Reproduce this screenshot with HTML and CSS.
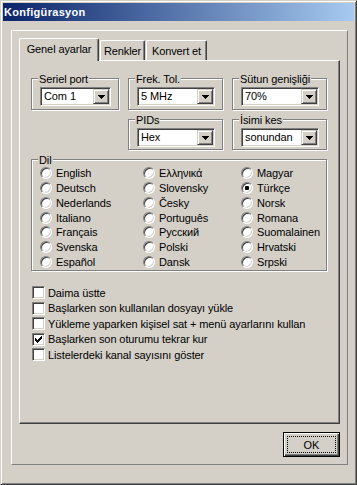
FILE: index.html
```html
<!DOCTYPE html>
<html lang="tr">
<head>
  <meta charset="UTF-8" />
  <title>Konfigürasyon</title>
  <link rel="stylesheet" href="styles.css">
</head>
<body>
  <div class="window">
    <div class="titlebar">Konfigürasyon</div>

    <div class="client">
      <div class="tabs">
        <div class="tab tab-genel active">Genel ayarlar</div>
        <div class="tab tab-renkler">Renkler</div>
        <div class="tab tab-konvert">Konvert et</div>
      </div>

      <div class="tab-page">
        <div class="groups">
          <div class="group">
            <div class="group-title">Seriel port</div>
            <div class="combo"><span class="combo-value">Com 1</span><span class="combo-btn"><svg width="7" height="4" viewBox="0 0 7 4" shape-rendering="crispEdges"><path d="M0 0h7v1H0zM1 1h5v1H1zM2 2h3v1H2zM3 3h1v1H3z" fill="#000"/></svg></span></div>
          </div>
          <div class="group">
            <div class="group-title">Frek. Tol.</div>
            <div class="combo"><span class="combo-value">5 MHz</span><span class="combo-btn"><svg width="7" height="4" viewBox="0 0 7 4" shape-rendering="crispEdges"><path d="M0 0h7v1H0zM1 1h5v1H1zM2 2h3v1H2zM3 3h1v1H3z" fill="#000"/></svg></span></div>
          </div>
          <div class="group">
            <div class="group-title">Sütun genişliği</div>
            <div class="combo"><span class="combo-value">70%</span><span class="combo-btn"><svg width="7" height="4" viewBox="0 0 7 4" shape-rendering="crispEdges"><path d="M0 0h7v1H0zM1 1h5v1H1zM2 2h3v1H2zM3 3h1v1H3z" fill="#000"/></svg></span></div>
          </div>

          <div class="group group-pids">
            <div class="group-title">PIDs</div>
            <div class="combo"><span class="combo-value">Hex</span><span class="combo-btn"><svg width="7" height="4" viewBox="0 0 7 4" shape-rendering="crispEdges"><path d="M0 0h7v1H0zM1 1h5v1H1zM2 2h3v1H2zM3 3h1v1H3z" fill="#000"/></svg></span></div>
          </div>
          <div class="group">
            <div class="group-title">İsimi kes</div>
            <div class="combo"><span class="combo-value">sonundan</span><span class="combo-btn"><svg width="7" height="4" viewBox="0 0 7 4" shape-rendering="crispEdges"><path d="M0 0h7v1H0zM1 1h5v1H1zM2 2h3v1H2zM3 3h1v1H3z" fill="#000"/></svg></span></div>
          </div>

          <div class="group group-dil">
            <div class="group-title">Dil</div>
            <div class="radios">
              <label class="radio"><span class="radio-mark"></span>English</label>
              <label class="radio"><span class="radio-mark"></span>Deutsch</label>
              <label class="radio"><span class="radio-mark"></span>Nederlands</label>
              <label class="radio"><span class="radio-mark"></span>Italiano</label>
              <label class="radio"><span class="radio-mark"></span>Français</label>
              <label class="radio"><span class="radio-mark"></span>Svenska</label>
              <label class="radio"><span class="radio-mark"></span>Español</label>

              <label class="radio"><span class="radio-mark"></span>Ελληνικά</label>
              <label class="radio"><span class="radio-mark"></span>Slovensky</label>
              <label class="radio"><span class="radio-mark"></span>Česky</label>
              <label class="radio"><span class="radio-mark"></span>Português</label>
              <label class="radio"><span class="radio-mark"></span>Русский</label>
              <label class="radio"><span class="radio-mark"></span>Polski</label>
              <label class="radio"><span class="radio-mark"></span>Dansk</label>

              <label class="radio"><span class="radio-mark"></span>Magyar</label>
              <label class="radio"><span class="radio-mark checked"></span>Türkçe</label>
              <label class="radio"><span class="radio-mark"></span>Norsk</label>
              <label class="radio"><span class="radio-mark"></span>Romana</label>
              <label class="radio"><span class="radio-mark"></span>Suomalainen</label>
              <label class="radio"><span class="radio-mark"></span>Hrvatski</label>
              <label class="radio"><span class="radio-mark"></span>Srpski</label>
            </div>
          </div>
        </div>

        <div class="checks">
          <label class="check"><span class="check-box"></span>Daima üstte</label>
          <label class="check"><span class="check-box"></span>Başlarken son kullanılan dosyayı yükle</label>
          <label class="check"><span class="check-box"></span>Yükleme yaparken kişisel sat + menü ayarlarını kullan</label>
          <label class="check"><span class="check-box"><svg width="7" height="7" viewBox="0 0 7 7" shape-rendering="crispEdges"><path d="M0 2h1v3H0zM1 3h1v3H1zM2 4h1v3H2zM3 3h1v3H3zM4 2h1v3H4zM5 1h1v3H5zM6 0h1v3H6z" fill="#000"/></svg></span>Başlarken son oturumu tekrar kur</label>
          <label class="check"><span class="check-box"></span>Listelerdeki kanal sayısını göster</label>
        </div>
      </div>

      <div class="footer">
        <button class="btn-ok"><span class="btn-focus">OK</span></button>
      </div>
    </div>
  </div>
</body>
</html>
```

FILE: styles.css
```css
html, body {
  margin: 0;
  padding: 0;
  background: #d4d0c8;
  font-family: "Liberation Sans", Arial, sans-serif;
  font-size: 11px;
  letter-spacing: -0.1px;
  color: #000;
}

.window {
  width: 357px;
  height: 485px;
  box-sizing: border-box;
  padding: 2px;
  border: 1px solid;
  border-color: #d4d0c8 #404040 #404040 #d4d0c8;
  box-shadow: inset 1px 1px 0 #fff, inset -1px -1px 0 #808080;
}

.titlebar {
  height: 18px;
  line-height: 18px;
  padding-left: 1px;
  color: #fff;
  font-weight: bold;
  letter-spacing: 0.3px;
  background: linear-gradient(to right, #0a246a, #a6caf0);
}

.client {
  margin: 9px 0 0 8px;
  width: 337px;
  height: 435px;
  box-sizing: border-box;
  padding: 7px;
  border: 1px solid;
  border-color: #fff #808080 #808080 #fff;
  display: flex;
  flex-direction: column;
}

/* tabs */
.tabs {
  height: 22px;
  display: flex;
  align-items: flex-end;
}

.tab {
  height: 20px;
  box-sizing: border-box;
  margin-right: 1px;
  padding-top: 4px;
  line-height: 13px;
  text-align: center;
  background: #d4d0c8;
  border: 1px solid;
  border-bottom: none;
  border-color: #fff #404040 #fff #fff;
  border-radius: 2px 2px 0 0;
  box-shadow: inset -1px 0 0 #808080;
}

.tab.active {
  height: 23px;
  margin-bottom: -1px;
  position: relative;
  z-index: 1;
}

.tab-genel { width: 80px; }
.tab-renkler { width: 45px; }
.tab-konvert { width: 61px; }

.tab-page {
  height: 364px;
  box-sizing: border-box;
  padding: 17px 11px 0;
  border: 1px solid;
  border-color: #fff #404040 #404040 #fff;
  box-shadow: inset -1px -1px 0 #808080;
}

/* group boxes */
.groups {
  display: grid;
  grid-template-columns: 88px 95px 95px;
  grid-template-rows: 32px 31px 112px;
  gap: 9px;
}

.group {
  box-sizing: border-box;
  border: 1px solid #808080;
  box-shadow: inset 1px 1px 0 #fff, 1px 1px 0 #fff;
}

.group-pids { grid-column: 2; }
.group-dil { grid-column: 1 / -1; }

.group-title {
  width: fit-content;
  height: 13px;
  margin: -6px 0 0 6px;
  padding: 0 1px;
  line-height: 13px;
  background: #d4d0c8;
}

/* combo box */
.combo {
  display: flex;
  height: 19px;
  box-sizing: border-box;
  margin: 1px 7px 0 8px;
  padding: 1px;
  background: #fff;
  border: 1px solid;
  border-color: #808080 #fff #fff #808080;
  box-shadow: inset 1px 1px 0 #404040, inset -1px -1px 0 #d4d0c8;
}

.combo-value {
  flex: 1;
  padding-left: 2px;
  line-height: 15px;
  white-space: nowrap;
  overflow: hidden;
}

.combo-btn {
  width: 16px;
  height: 15px;
  box-sizing: border-box;
  display: flex;
  align-items: center;
  justify-content: center;
  background: #d4d0c8;
  border: 1px solid;
  border-color: #d4d0c8 #404040 #404040 #d4d0c8;
  box-shadow: inset 1px 1px 0 #fff, inset -1px -1px 0 #808080;
}

.combo-btn svg {
  display: block;
}

/* radios */
.radios {
  display: grid;
  grid-template-columns: 103px 98px 1fr;
  grid-template-rows: repeat(7, 14.75px);
  grid-auto-flow: column;
  margin-top: -1px;
  padding-left: 8px;
}

.radio {
  display: flex;
  align-items: center;
  white-space: nowrap;
}

.radio-mark {
  width: 12px;
  height: 12px;
  box-sizing: border-box;
  margin-right: 4px;
  border-radius: 50%;
  background: #fff;
  border: 1px solid;
  border-color: #808080 #fff #fff #808080;
  box-shadow: inset 1px 1px 0 #404040, inset -1px -1px 0 #d4d0c8;
}

.radio-mark.checked::after {
  content: "";
  display: block;
  width: 4px;
  height: 4px;
  margin: 3px;
  border-radius: 1px;
  background: #000;
}

/* checkboxes */
.checks {
  margin-top: 14px;
  padding-left: 1px;
}

.check {
  display: flex;
  align-items: center;
  height: 15.5px;
  white-space: nowrap;
}

.check-box {
  width: 13px;
  height: 13px;
  box-sizing: border-box;
  margin-right: 3px;
  padding: 2px;
  background: #fff;
  border: 1px solid;
  border-color: #808080 #fff #fff #808080;
  box-shadow: inset 1px 1px 0 #404040, inset -1px -1px 0 #d4d0c8;
}

.check-box svg {
  display: block;
}

/* footer */
.footer {
  display: flex;
  justify-content: flex-end;
  margin-top: 8px;
}

.btn-ok {
  width: 57px;
  height: 25px;
  box-sizing: border-box;
  padding: 3px;
  display: flex;
  font: inherit;
  color: #000;
  background: #d4d0c8;
  border: 1px solid #000;
  border-radius: 0;
  box-shadow: inset 1px 1px 0 #fff, inset -1px -1px 0 #404040, inset -2px -2px 0 #808080;
}

.btn-focus {
  flex: 1;
  display: flex;
  align-items: center;
  justify-content: center;
  border: 1px dotted #000;
}
```
